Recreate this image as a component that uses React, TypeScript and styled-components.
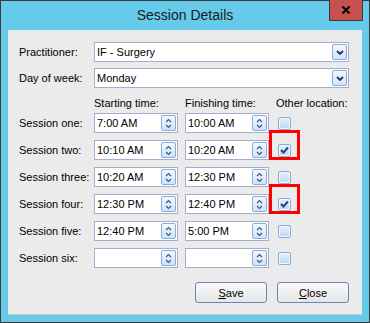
import React from 'react';
import styled, { createGlobalStyle } from 'styled-components';

const GlobalStyle = createGlobalStyle`
  html, body {
    margin: 0;
    padding: 0;
    background: #ffffff;
  }
  body {
    font-family: "Liberation Sans", Arial, sans-serif;
    font-size: 11px;
    color: #000;
  }
`;

const Window = styled.div`
  width: 370px;
  height: 323px;
  box-sizing: border-box;
  border: 1px solid #3b3b3b;
  background: #66cbea;
  display: flex;
  flex-direction: column;
`;

const TitleBar = styled.div`
  height: 29px;
  display: flex;
  align-items: flex-start;
`;

const Title = styled.div`
  flex: 1;
  padding-left: 40px;
  text-align: center;
  font-size: 14px;
  line-height: 28px;
  color: #1a1a1a;
`;

const CloseButton = styled.button`
  width: 34px;
  height: 21px;
  margin: -1px 6px 0 0;
  padding: 0;
  border: 1px solid #3b3b3b;
  border-top: none;
  background: #c75050;
  display: flex;
  align-items: center;
  justify-content: center;
  cursor: pointer;
`;

const Client = styled.div`
  flex: 1;
  margin: 0 7px 7px 7px;
  background: #ebebeb;
  border-bottom: 1px solid #c8c8c8;
  display: flex;
  flex-direction: column;
  padding: 12px 13px 0 11px;
`;

const Row = styled.div<{ $top?: number; $height?: number }>`
  display: grid;
  grid-template-columns: 68px 84px 84px 1fr;
  column-gap: 7px;
  align-items: center;
  height: ${({ $height }) => $height ?? 20}px;
  margin-top: ${({ $top }) => $top ?? 0}px;
`;

const Label = styled.div`
  white-space: nowrap;
`;

const Field = styled.div<{ $span?: boolean }>`
  grid-column: ${({ $span }) => ($span ? '2 / 5' : 'auto')};
  height: 20px;
  box-sizing: border-box;
  border: 1px solid #a9abd0;
  background: #ffffff;
  display: flex;
  align-items: center;
  padding: 1px 1px 1px 2px;
`;

const FieldText = styled.div`
  flex: 1;
  white-space: nowrap;
  overflow: hidden;
`;

const SmallButton = styled.div`
  width: 15px;
  height: 16px;
  box-sizing: border-box;
  border: 1px solid #86aedb;
  border-radius: 2px;
  background: linear-gradient(#f3f8fd, #cfe3f7);
  display: flex;
  align-items: center;
  justify-content: center;
`;

const CheckCell = styled.div`
  position: relative;
  display: flex;
  align-items: center;
  padding-left: 2px;
`;

const Box = styled.div`
  width: 13px;
  height: 13px;
  box-sizing: border-box;
  border: 1px solid #86acd8;
  border-radius: 2px;
  background: linear-gradient(#e3effb 0%, #d2e4f6 50%, #bcd6f1 100%);
  box-shadow: inset 0 0 0 1px #f2f7fd;
  display: flex;
  align-items: center;
  justify-content: center;
`;

const Highlight = styled.span`
  position: absolute;
  left: -7px;
  top: -14px;
  width: 31px;
  height: 30px;
  box-sizing: border-box;
  border: 3px solid #ff0000;
  pointer-events: none;
`;

const Buttons = styled.div`
  display: flex;
  justify-content: flex-end;
  gap: 10px;
  margin-top: 14px;
`;

const PushButton = styled.button`
  width: 72px;
  height: 21px;
  box-sizing: border-box;
  border: 1px solid #6a86ad;
  border-radius: 3px;
  background: linear-gradient(#f9f9f9, #e6e6e6);
  font-family: "Liberation Sans", Arial, sans-serif;
  font-size: 11px;
  color: #000;
  padding: 0;
  cursor: pointer;

  u {
    text-decoration: underline;
    text-underline-offset: 1px;
  }
`;

const Combo = ({ value }: { value: string }) => (
  <Field $span>
    <FieldText>{value}</FieldText>
    <SmallButton>
      <svg width="8" height="5" viewBox="0 0 8 5">
        <path d="M1 1 L4 4 L7 1" fill="none" stroke="#1f3558" strokeWidth="1.8" />
      </svg>
    </SmallButton>
  </Field>
);

const TimeBox = ({ value }: { value: string }) => (
  <Field>
    <FieldText>{value}</FieldText>
    <SmallButton>
      <svg width="7" height="11" viewBox="0 0 7 11">
        <path d="M1 4 L3.5 1.5 L6 4 M1 7 L3.5 9.5 L6 7" fill="none" stroke="#3a5a85" strokeWidth="1.2" />
      </svg>
    </SmallButton>
  </Field>
);

const CheckBox = ({ checked, marked }: { checked: boolean; marked: boolean }) => (
  <CheckCell>
    <Box>
      {checked && (
        <svg width="9" height="8" viewBox="0 0 9 8">
          <path d="M1 4 L3.5 6.5 L8 1.5" fill="none" stroke="#25467c" strokeWidth="2" />
        </svg>
      )}
    </Box>
    {marked && <Highlight />}
  </CheckCell>
);

type Session = {
  name: string;
  start: string;
  finish: string;
  other: boolean;
};

const sessions: Session[] = [
  { name: 'Session one:', start: '7:00 AM', finish: '10:00 AM', other: false },
  { name: 'Session two:', start: '10:10 AM', finish: '10:20 AM', other: true },
  { name: 'Session three:', start: '10:20 AM', finish: '12:30 PM', other: false },
  { name: 'Session four:', start: '12:30 PM', finish: '12:40 PM', other: true },
  { name: 'Session five:', start: '12:40 PM', finish: '5:00 PM', other: false },
  { name: 'Session six:', start: '', finish: '', other: false },
];

const App = () => (
  <>
    <GlobalStyle />
    <Window>
      <TitleBar>
        <Title>Session Details</Title>
        <CloseButton aria-label="Close">
          <svg width="10" height="8" viewBox="0 0 10 8">
            <path d="M1.5 0.5 L8.5 7.5 M8.5 0.5 L1.5 7.5" stroke="#000" strokeWidth="2" />
          </svg>
        </CloseButton>
      </TitleBar>
      <Client>
        <Row>
          <Label>Practitioner:</Label>
          <Combo value="IF - Surgery" />
        </Row>
        <Row $top={6}>
          <Label>Day of week:</Label>
          <Combo value="Monday" />
        </Row>
        <Row $top={8} $height={14}>
          <span />
          <Label>Starting time:</Label>
          <Label>Finishing time:</Label>
          <Label>Other location:</Label>
        </Row>
        {sessions.map((s, i) => (
          <Row key={s.name} $top={i === 0 ? 3 : 7}>
            <Label>{s.name}</Label>
            <TimeBox value={s.start} />
            <TimeBox value={s.finish} />
            <CheckBox checked={s.other} marked={s.other} />
          </Row>
        ))}
        <Buttons>
          <PushButton>
            <u>S</u>ave
          </PushButton>
          <PushButton>
            <u>C</u>lose
          </PushButton>
        </Buttons>
      </Client>
    </Window>
  </>
);

export default App;
